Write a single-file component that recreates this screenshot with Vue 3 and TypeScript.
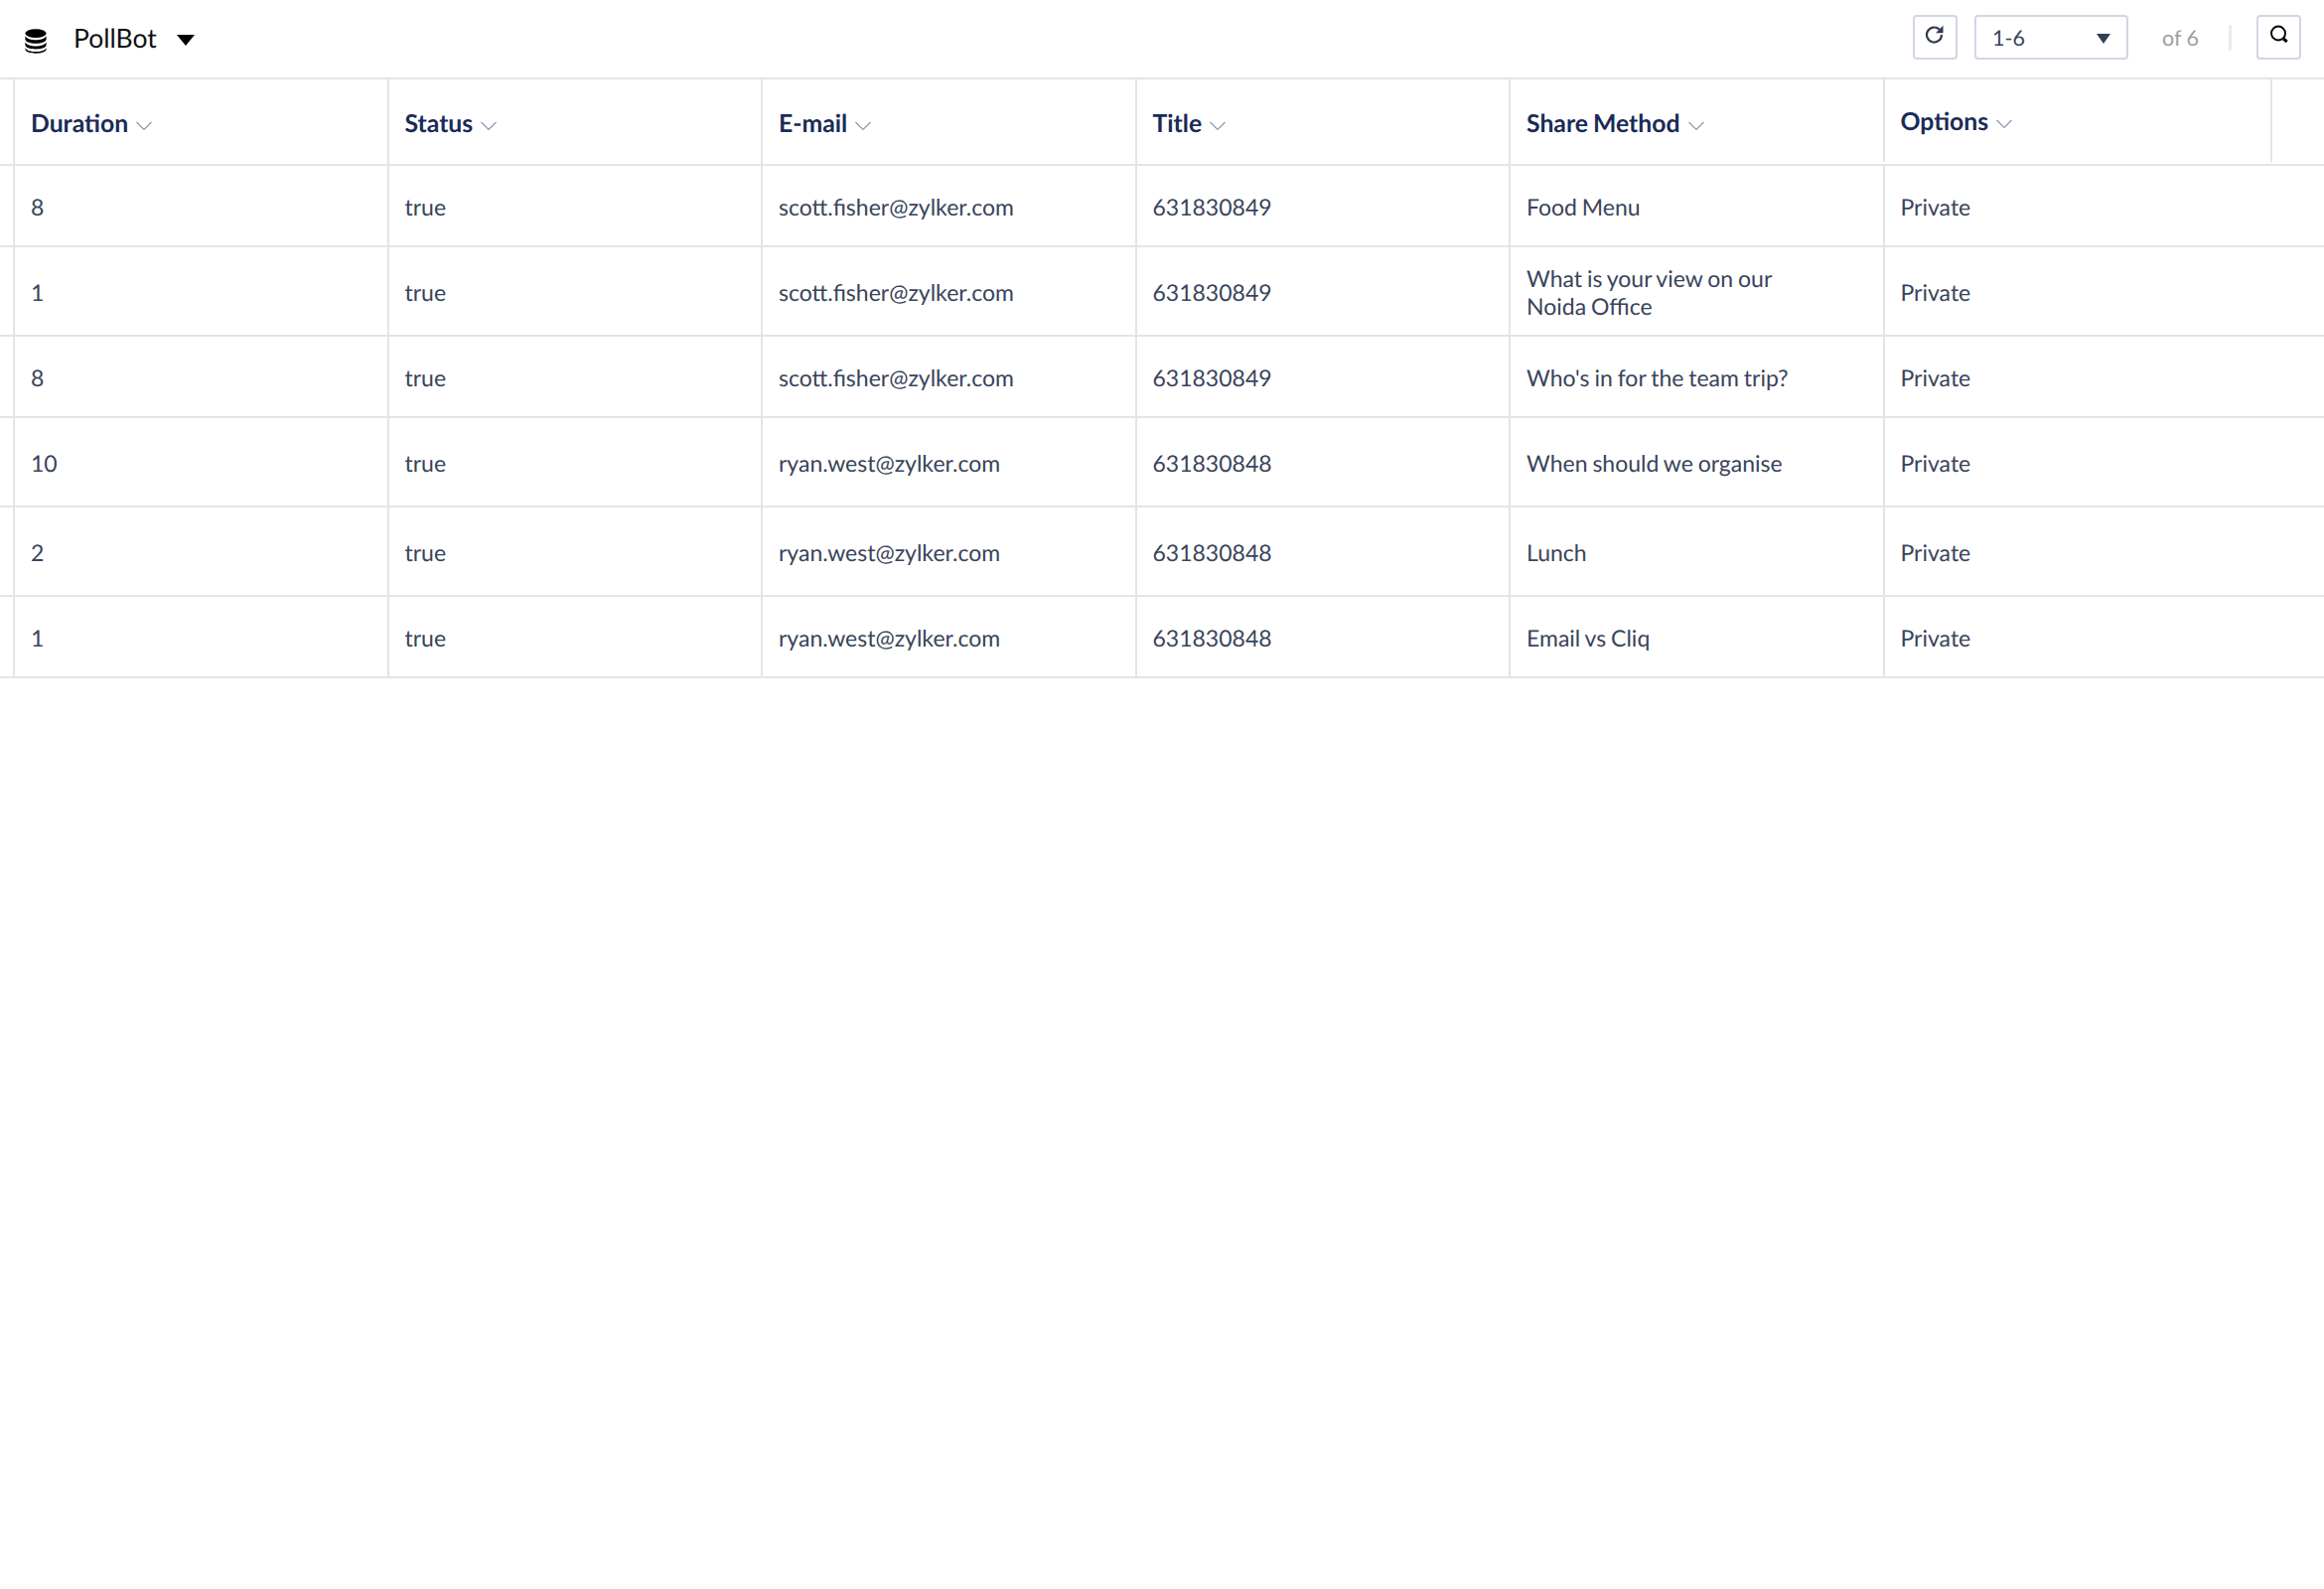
<script setup lang="ts">
interface Row { d: string; email: string; title: string; share: string[]; cls: string }
const columns: string[] = ['Duration', 'Status', 'E-mail', 'Title', 'Share Method']
const rows: Row[] = [
  { d: '8', email: 'scott.fisher@zylker.com', title: '631830849', share: ['Food Menu'], cls: 'h82' },
  { d: '1', email: 'scott.fisher@zylker.com', title: '631830849', share: ['What is your view on our', 'Noida Office'], cls: 'h90' },
  { d: '8', email: 'scott.fisher@zylker.com', title: '631830849', share: ["Who's in for the team trip?"], cls: 'h82' },
  { d: '10', email: 'ryan.west@zylker.com', title: '631830848', share: ['When should we organise'], cls: 'h90' },
  { d: '2', email: 'ryan.west@zylker.com', title: '631830848', share: ['Lunch'], cls: 'h90' },
  { d: '1', email: 'ryan.west@zylker.com', title: '631830848', share: ['Email vs Cliq'], cls: 'h82' },
]
</script>

<template>
  <div class="page">
    <header class="toolbar">
      <div class="brand">
        <svg class="db" viewBox="0 0 22 25" width="22" height="25">
          <ellipse cx="11" cy="4.600" rx="10.600" ry="4.400" fill="#000" />
          <path d="M.4 7.200c1.600 2.600 5.700 4 10.600 4s9-1.400 10.600-4v3.200c0 2.400-4.700 4.300-10.600 4.300S.4 12.800.4 10.400z" fill="#000" />
          <path d="M.4 13.400c1.600 2.600 5.700 4 10.600 4s9-1.400 10.600-4v2.900c0 2.400-4.700 4.200-10.600 4.200S.4 18.700.4 16.300z" fill="#000" />
          <path d="M.4 19.200c1.600 2.600 5.700 3.900 10.600 3.900s9-1.300 10.600-3.900v1.400c0 2.400-4.700 4.200-10.600 4.200S.4 23 .4 20.600z" fill="#000" />
        </svg>
        <span class="name">PollBot</span>
        <span class="caret big"></span>
      </div>
      <div class="tools">
        <button class="box icon">
          <svg viewBox="0 0 20 20" width="20" height="20">
            <path d="M17 10a7.500 7.500 0 1 1-2.300-5.400" fill="none" stroke="#2f3a52" stroke-width="2.200" />
            <path d="M18.500 .8v7.400h-7.400z" fill="#2f3a52" />
          </svg>
        </button>
        <div class="box select">
          <span>1-6</span>
          <span class="caret small"></span>
        </div>
        <span class="of">of 6</span>
        <span class="divider"></span>
        <button class="box icon">
          <svg viewBox="0 0 20 20" width="20" height="20">
            <circle cx="9" cy="8.500" r="7" fill="none" stroke="#000" stroke-width="1.900" />
            <path d="M14.200 14l3.500 3" stroke="#000" stroke-width="3" />
          </svg>
        </button>
      </div>
    </header>

    <div class="table">
      <div class="row head">
        <div class="stub"></div>
        <div v-for="c in columns" :key="c" class="cell">
          <span class="title">{{ c }}</span>
          <svg class="chev" viewBox="0 0 16 10" width="16" height="10"><path d="M.5 1l7.500 7.500L15.500 1" fill="none" stroke="#8f96ad" stroke-width="1.200" /></svg>
        </div>
        <div class="cell opt">
          <span class="title">Options</span>
          <svg class="chev" viewBox="0 0 16 10" width="16" height="10"><path d="M.5 1l7.500 7.500L15.500 1" fill="none" stroke="#8f96ad" stroke-width="1.200" /></svg>
        </div>
      </div>
      <div v-for="(r, i) in rows" :key="i" class="row" :class="r.cls">
        <div class="stub"></div>
        <div class="cell">{{ r.d }}</div>
        <div class="cell">true</div>
        <div class="cell">{{ r.email }}</div>
        <div class="cell">{{ r.title }}</div>
        <div class="cell"><div>
          <div v-for="l in r.share" :key="l" class="line">{{ l }}</div>
        </div></div>
        <div class="cell">Private</div>
      </div>
    </div>
  </div>
</template>

<style>
html, body { margin: 0; background: #fff; }
</style>

<style scoped>
.page {
  width: 2340px;
  height: 1600px;
  background: #fff;
  font-family: Lato, sans-serif;
  color: #39445b;
  text-rendering: geometricPrecision;
}
.toolbar {
  box-sizing: border-box;
  height: 80px;
  display: flex;
  align-items: center;
  justify-content: space-between;
  padding: 0 23px 0 26px;
  border-bottom: 2px solid #e3e4ea;
}
.brand { display: flex; align-items: center; }
.db { margin-top: 4px; margin-left: -1px; }
.name { margin-left: 27px; margin-top: -2px; font-size: 26.500px; color: #111; }
.caret { display: inline-block; width: 0; height: 0; border-style: solid; border-color: transparent; }
.caret.big { margin-left: 20px; margin-top: 3px; border-width: 11px 9px 0; border-top-color: #000; }
.caret.small { margin-top: 2px; border-width: 10px 7px 0; border-top-color: #333e55; }
.tools { display: flex; align-items: center; margin-top: -3px; }
.box {
  box-sizing: border-box;
  height: 45px;
  border: 2px solid #d3d5e4;
  border-radius: 4px;
  background: #fff;
  padding: 0;
}
.icon { width: 45px; display: flex; align-items: center; justify-content: center; }
.icon svg { margin-top: -6px; }
.select {
  width: 155px;
  margin-left: 17px;
  margin-right: 1px;
  display: flex;
  align-items: center;
  justify-content: space-between;
  padding: 0 16px 0 16px;
  font-size: 21.500px;
}
.of { margin-left: 33px; font-size: 21.500px; color: #a0a0a0; }
.divider { width: 3px; height: 26px; margin: 0 25px 0 30px; background: #ececec; }
.row {
  display: grid;
  grid-template-columns: 13px repeat(5, 376.500px) 1fr;
  border-bottom: 2px solid #e3e4ea;
  box-sizing: border-box;
  font-size: 23px;
  word-spacing: -1px;
}
.h82 { height: 82px; }
.h90 { height: 90px; }
.head { height: 86.500px; }
.cell {
  box-sizing: border-box;
  display: flex;
  align-items: center;
  padding: 2px 0 0 16px;
  border-left: 2px solid #e3e4ea;
}
.head .cell { padding-top: 4px; }
.line { line-height: 28px; }
.title { font-weight: 700; font-size: 24.750px; color: #1a2b57; }
.chev { margin-left: 8px; margin-top: 5px; }
.head .opt { padding-top: 2px; width: 392.500px; border-right: 2px solid #e3e4ea; margin-bottom: 2px; }
</style>
